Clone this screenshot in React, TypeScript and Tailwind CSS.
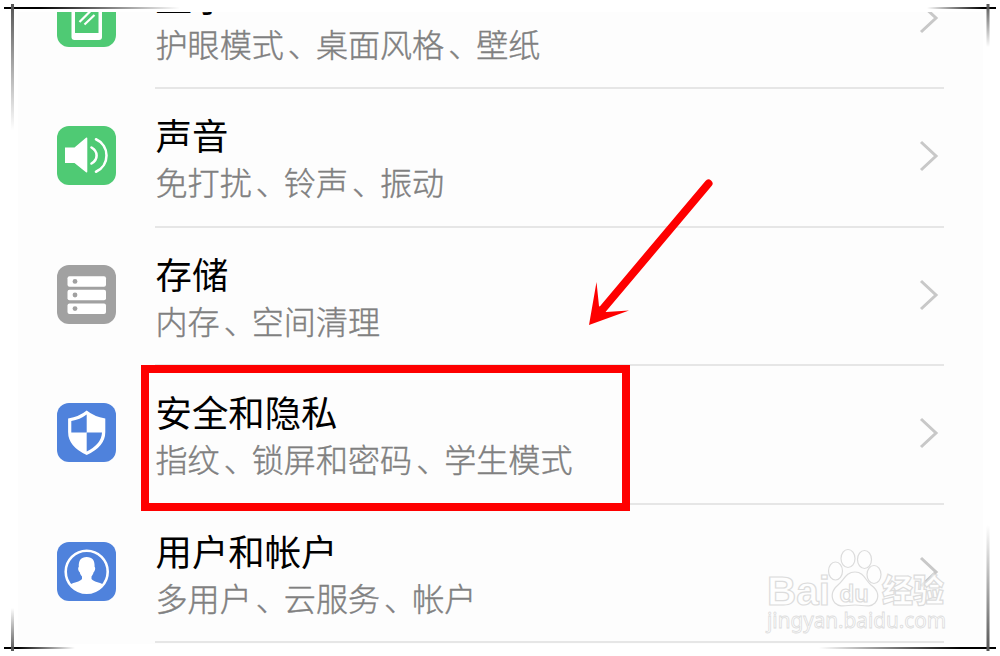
import React from "react";

type SettingsItem = {
  id: string;
  title: string;
  subtitle: string;
  color: string;
  icon: React.ReactNode;
};

const items: SettingsItem[] = [
  {
    id: "display",
    title: "显示",
    subtitle: "护眼模式、桌面风格、壁纸",
    color: "bg-[#4fca74]",
    icon: (
      <svg viewBox="0 0 59 59" className="w-full h-full">
        <rect x="14.500" y="7" width="30.500" height="45" rx="3" fill="#fff" />
        <rect x="18" y="12" width="23.500" height="33" fill="#4fca74" />
        <path d="M22.500 34 L35 21.500 M27.500 36.500 L37.500 27" stroke="#fff" strokeWidth="2.200" />
      </svg>
    ),
  },
  {
    id: "sound",
    title: "声音",
    subtitle: "免打扰、铃声、振动",
    color: "bg-[#4fca74]",
    icon: (
      <svg viewBox="0 0 59 59" className="w-full h-full">
        <path d="M8 21.500 H17.500 L29 11.800 Q30.300 11 30.300 12.500 V45.500 Q30.300 47 29 46.200 L17.500 37 H8 Z" fill="#fff" />
        <path d="M34.500 21.500 Q39.600 24.500 39.600 29.500 T34.500 37.500" fill="none" stroke="#fff" strokeWidth="2.600" strokeLinecap="round" />
        <path d="M39 13.300 C53 19.500 53 39.500 39 45.700" fill="none" stroke="#fff" strokeWidth="2.600" strokeLinecap="round" />
      </svg>
    ),
  },
  {
    id: "storage",
    title: "存储",
    subtitle: "内存、空间清理",
    color: "bg-[#a1a1a1]",
    icon: (
      <svg viewBox="0 0 59 59" className="w-full h-full">
        {[11.2, 24.8, 38.4].map((y) => (
          <g key={y}>
            <rect x="10.500" y={y} width="38.500" height="10.500" rx="2" fill="#fff" />
            <circle cx="18" cy={y + 5.2} r="2.400" fill="#a1a1a1" />
          </g>
        ))}
      </svg>
    ),
  },
  {
    id: "security",
    title: "安全和隐私",
    subtitle: "指纹、锁屏和密码、学生模式",
    color: "bg-[#4f82dc]",
    icon: (
      <svg viewBox="0 0 59 59" className="w-full h-full">
        <path d="M29.700 7.500 Q37 13.500 48.300 15.500 V29 Q48.300 43.500 29.700 52 Q11.100 43.500 11.100 29 V15.500 Q22.500 13.500 29.700 7.500 Z" fill="#fff" />
        <path d="M29.700 11.500 V29.500 H14.300 V18 Q23 16.500 29.700 11.500 Z" fill="#4f82dc" />
        <path d="M29.700 29.500 H45 Q44.500 41 29.700 48.500 Z" fill="#4f82dc" />
      </svg>
    ),
  },
  {
    id: "users",
    title: "用户和帐户",
    subtitle: "多用户、云服务、帐户",
    color: "bg-[#4f82dc]",
    icon: (
      <svg viewBox="0 0 59 59" className="w-full h-full">
        <circle cx="29.700" cy="29.700" r="21" fill="none" stroke="#fff" strokeWidth="2.600" />
        <path
          d="M29.700 15 C35.500 15 38 18.500 37.600 25 C38.800 25.500 38 29.500 36.700 30 C36.300 32.500 35 33.500 34.500 34.500 V37 C37 40 42 40 46.500 42.500 Q40 51 29.700 51 T13 42.500 C17.500 40 22.500 40 25 37 V34.500 C24.300 33.500 23 32.500 22.700 30 C21.300 29.500 20.600 25.500 21.800 25 C21.400 18.500 23.900 15 29.700 15 Z"
          fill="#fff"
        />
      </svg>
    ),
  },
];

function SettingsRow({ item }: { item: SettingsItem }) {
  return (
    <div className="flex shrink-0 gap-[39px] h-[138.5px] px-[39px]">
      <div className={`mt-[37px] w-[59px] h-[59px] shrink-0 rounded-[12px] overflow-hidden ${item.color}`}>
        {item.icon}
      </div>
      <div className="flex-1 flex justify-between border-b-2 border-[#e6e6e6]">
        <div className="pt-[21px] pl-[0.5px] whitespace-nowrap">
          <h2 className="text-[36.4px] leading-[48px] text-black">{item.title}</h2>
          <p className="text-[32.1px] leading-[46px] font-light text-[#808080] [-webkit-text-stroke:0.4px_#808080]">
            {item.subtitle.split("、").map((part, index) => (
              <React.Fragment key={part}>
                {index > 0 && <span className="inline-block translate-x-1">、</span>}
                {part}
              </React.Fragment>
            ))}
          </p>
        </div>
        <svg viewBox="0 0 20 32" className="mt-[51px] mr-[5px] w-5 h-8" fill="none">
          <path d="M2 2 L17 16 L2 30" stroke="#c8c8c8" strokeWidth="3" />
        </svg>
      </div>
    </div>
  );
}

// Crossed lines that fade out away from each corner of the frame
function FrameCorners() {
  return (
    <svg viewBox="0 0 1000 656" className="absolute inset-0 w-full h-full">
      <defs>
        <linearGradient id="fadeRight">
          <stop offset="0.2" stopColor="#000" />
          <stop offset="1" stopColor="#000" stopOpacity="0" />
        </linearGradient>
        <linearGradient id="fadeLeft" x1="1" x2="0">
          <stop offset="0.2" stopColor="#000" />
          <stop offset="1" stopColor="#000" stopOpacity="0" />
        </linearGradient>
        <linearGradient id="fadeDown" x2="0" y2="1">
          <stop offset="0" stopColor="#555" />
          <stop offset="1" stopColor="#555" stopOpacity="0" />
        </linearGradient>
        <linearGradient id="fadeUp" x2="0" y1="1" y2="0">
          <stop offset="0" stopColor="#555" />
          <stop offset="1" stopColor="#555" stopOpacity="0" />
        </linearGradient>
      </defs>
      <rect x="4" y="7" width="176" height="2" fill="url(#fadeRight)" />
      <rect x="11" y="4" width="3" height="126" fill="url(#fadeDown)" />
      <rect x="927" y="7" width="69" height="2" fill="url(#fadeLeft)" />
      <rect x="986.500" y="4" width="3" height="43" fill="url(#fadeDown)" />
      <rect x="4" y="647" width="71" height="2" fill="url(#fadeRight)" />
      <rect x="11" y="608" width="3" height="43" fill="url(#fadeUp)" />
      <rect x="819" y="647" width="177" height="2" fill="url(#fadeLeft)" />
      <rect x="986.500" y="525" width="3" height="126" fill="url(#fadeUp)" />
    </svg>
  );
}

function Arrow() {
  return (
    <svg viewBox="0 0 140 160" className="absolute left-[580px] top-[170px] w-[140px] h-[160px]">
      <path d="M128.500 13.500 L22 140" stroke="#fe0000" strokeWidth="8" strokeLinecap="round" />
      <path d="M9 155 L16.500 112 L19 136 L26 142 L49 140.500 Z" fill="#fe0000" />
    </svg>
  );
}

function Watermark() {
  return (
    <svg
      viewBox="0 0 190 96"
      className="absolute left-[762px] top-[543px] w-[190px] h-[96px] font-['Liberation_Sans','Noto_Sans_CJK_SC',sans-serif]"
      fill="#ffffff"
      fillOpacity="0.65"
      stroke="#dcdcdc"
      strokeWidth="1.200"
    >
      <text x="5" y="61.500" fontSize="40" fontWeight="700" textLength="63" lengthAdjust="spacingAndGlyphs">Bai</text>
      <ellipse cx="73.500" cy="28" rx="7" ry="9" />
      <ellipse cx="86" cy="15.500" rx="7" ry="9" />
      <ellipse cx="102.500" cy="16.500" rx="7" ry="9" />
      <ellipse cx="112" cy="31.500" rx="7" ry="9" />
      <path d="M93 29 C102 29 103 37 109 42 C116 47 118 54 113 60 C108 65 101 62 93 62 C85 62 78 65 73 60 C68 54 70 47 76 42 C82 37 84 29 93 29 Z" />
      <text x="77.500" y="58.500" fontSize="24" fontWeight="600" textLength="29" lengthAdjust="spacingAndGlyphs" className="font-['Inter',sans-serif]">du</text>
      <text x="120" y="59" fontSize="32" fontWeight="900" textLength="62" lengthAdjust="spacingAndGlyphs">经验</text>
      <text x="5" y="85" fontSize="21" strokeWidth="0.800" textLength="179" lengthAdjust="spacingAndGlyphs" className="font-['Noto_Sans',sans-serif]">jingyan.baidu.com</text>
    </svg>
  );
}

export default function App() {
  return (
    <div className="relative w-[1000px] h-[656px] overflow-hidden bg-white pl-[18px] pt-[12px] font-['Noto_Sans_CJK_SC',sans-serif]">
      <div className="w-[965px] h-[632px] overflow-hidden bg-[#fdfdfd] flex flex-col justify-end">
        {items.map((item) => (
          <SettingsRow key={item.id} item={item} />
        ))}
        <div className="h-px shrink-0" />
      </div>

      <FrameCorners />
      <div className="absolute left-[141px] top-[365px] w-[489px] h-[146px] border-8 border-[#fe0000]" />
      <Arrow />
      <Watermark />
    </div>
  );
}
